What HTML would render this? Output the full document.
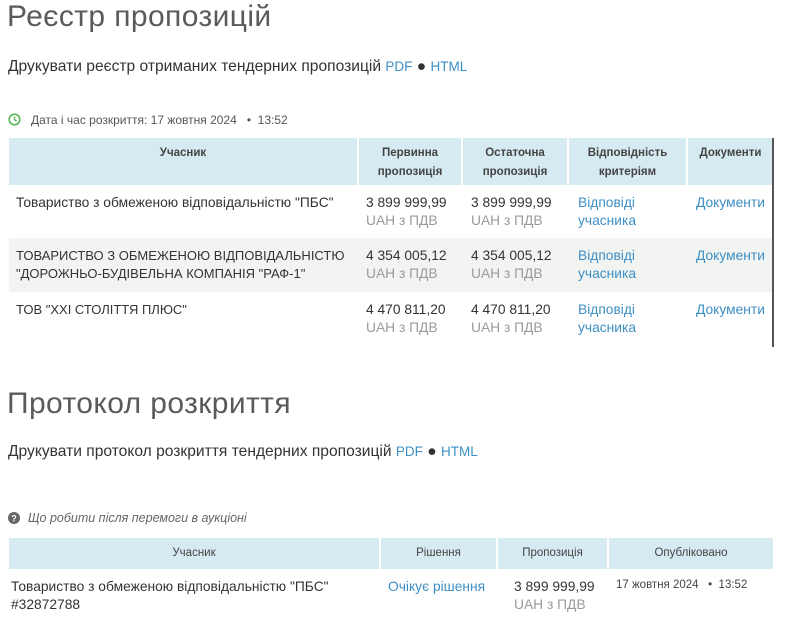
<!DOCTYPE html>
<html><head><meta charset="utf-8"><style>
*{margin:0;padding:0;box-sizing:border-box}
body{width:795px;height:641px;background:#fff;font-family:"Liberation Sans","DejaVu Sans",sans-serif;color:#333;position:relative;overflow:hidden}
.a{position:absolute;white-space:nowrap}
h1{position:absolute;font-weight:normal;font-size:30px;color:#5a5a5a;left:7px;letter-spacing:0.4px}
.l{color:#3d8fc4}
.g{color:#9a9a9a}
.hd{position:absolute;background:#d6eaf1;font-size:11.5px;font-weight:bold;color:#444;text-align:center;line-height:19px}
.t{font-size:13.8px;line-height:18px}
</style></head><body>
<h1 style="top:0px">Реєстр пропозицій</h1>
<div class="a t" style="left:8px;top:58px;font-size:15.6px">Друкувати реєстр отриманих тендерних пропозицій <span class="l" style="font-size:13.5px">PDF</span> ● <span class="l" style="font-size:13.5px">HTML</span></div>
<svg class="a" style="left:8px;top:113px" width="13" height="13" viewBox="0 0 13 13"><circle cx="6.5" cy="6.5" r="5.3" fill="none" stroke="#5cb85c" stroke-width="1.6"/><path d="M6.5 3.5V6.8L8.6 8" fill="none" stroke="#5cb85c" stroke-width="1.4"/></svg>
<div class="a" style="left:31px;top:113px;font-size:12px;color:#555">Дата і час розкриття: 17 жовтня 2024 &nbsp; • &nbsp;13:52</div>

<div class="hd" style="left:9px;top:138px;width:348px;height:47px;padding-top:6px">Учасник</div>
<div class="hd" style="left:359px;top:138px;width:102px;height:47px;padding-top:6px">Первинна<br>пропозиція</div>
<div class="hd" style="left:463px;top:138px;width:104px;height:47px;padding-top:6px">Остаточна<br>пропозиція</div>
<div class="hd" style="left:569px;top:138px;width:117px;height:47px;padding-top:6px">Відповідність<br>критеріям</div>
<div class="hd" style="left:688px;top:138px;width:85px;height:47px;padding-top:6px">Документи</div>
<div class="a" style="left:9px;top:238px;width:764px;height:54px;background:#f1f4f1"></div>
<div class="a" style="left:772px;top:138px;width:2px;height:209px;background:#555"></div>

<div class="a t" style="left:16px;top:194px">Товариство з обмеженою відповідальністю "ПБС"</div>
<div class="a t" style="left:16px;top:247px;font-size:13px">ТОВАРИСТВО З ОБМЕЖЕНОЮ ВІДПОВІДАЛЬНІСТЮ<br>"ДОРОЖНЬО-БУДІВЕЛЬНА КОМПАНІЯ "РАФ-1"</div>
<div class="a t" style="left:16px;top:301px;font-size:13px">ТОВ "XXI СТОЛІТТЯ ПЛЮС"</div>

<div class="a t" style="left:366px;top:194px">3 899 999,99<br><span class="g">UAH з ПДВ</span></div>
<div class="a t" style="left:471px;top:194px">3 899 999,99<br><span class="g">UAH з ПДВ</span></div>
<div class="a t l" style="left:578px;top:194px">Відповіді<br>учасника</div>
<div class="a t l" style="left:696px;top:194px">Документи</div>

<div class="a t" style="left:366px;top:247px">4 354 005,12<br><span class="g">UAH з ПДВ</span></div>
<div class="a t" style="left:471px;top:247px">4 354 005,12<br><span class="g">UAH з ПДВ</span></div>
<div class="a t l" style="left:578px;top:247px">Відповіді<br>учасника</div>
<div class="a t l" style="left:696px;top:247px">Документи</div>

<div class="a t" style="left:366px;top:301px">4 470 811,20<br><span class="g">UAH з ПДВ</span></div>
<div class="a t" style="left:471px;top:301px">4 470 811,20<br><span class="g">UAH з ПДВ</span></div>
<div class="a t l" style="left:578px;top:301px">Відповіді<br>учасника</div>
<div class="a t l" style="left:696px;top:301px">Документи</div>

<h1 style="top:387px">Протокол розкриття</h1>
<div class="a t" style="left:8px;top:443px;font-size:15.6px">Друкувати протокол розкриття тендерних пропозицій <span class="l" style="font-size:13.5px">PDF</span> ● <span class="l" style="font-size:13.5px">HTML</span></div>

<svg class="a" style="left:8px;top:512px" width="12" height="12" viewBox="0 0 12 12"><circle cx="6" cy="6" r="6" fill="#666"/><text x="6" y="9.5" font-size="9" font-weight="bold" fill="#fff" text-anchor="middle" font-family="Liberation Sans">?</text></svg>
<div class="a" style="left:28px;top:511px;font-size:12.5px;font-style:italic;color:#666">Що робити після перемоги в аукціоні</div>

<div class="hd" style="left:9px;top:538px;width:370px;height:31px;padding-top:6px;font-weight:normal">Учасник</div>
<div class="hd" style="left:381px;top:538px;width:115px;height:31px;padding-top:6px;font-weight:normal">Рішення</div>
<div class="hd" style="left:498px;top:538px;width:109px;height:31px;padding-top:6px;font-weight:normal">Пропозиція</div>
<div class="hd" style="left:609px;top:538px;width:164px;height:31px;padding-top:6px;font-weight:normal">Опубліковано</div>

<div class="a t" style="left:11px;top:578px">Товариство з обмеженою відповідальністю "ПБС"<br>#32872788</div>
<div class="a t l" style="left:388px;top:578px">Очікує рішення</div>
<div class="a t" style="left:514px;top:578px">3 899 999,99<br><span class="g">UAH з ПДВ</span></div>
<div class="a" style="left:616px;top:579px;font-size:11.5px;color:#444">17 жовтня 2024 &nbsp; • &nbsp;13:52</div>
</body></html>
